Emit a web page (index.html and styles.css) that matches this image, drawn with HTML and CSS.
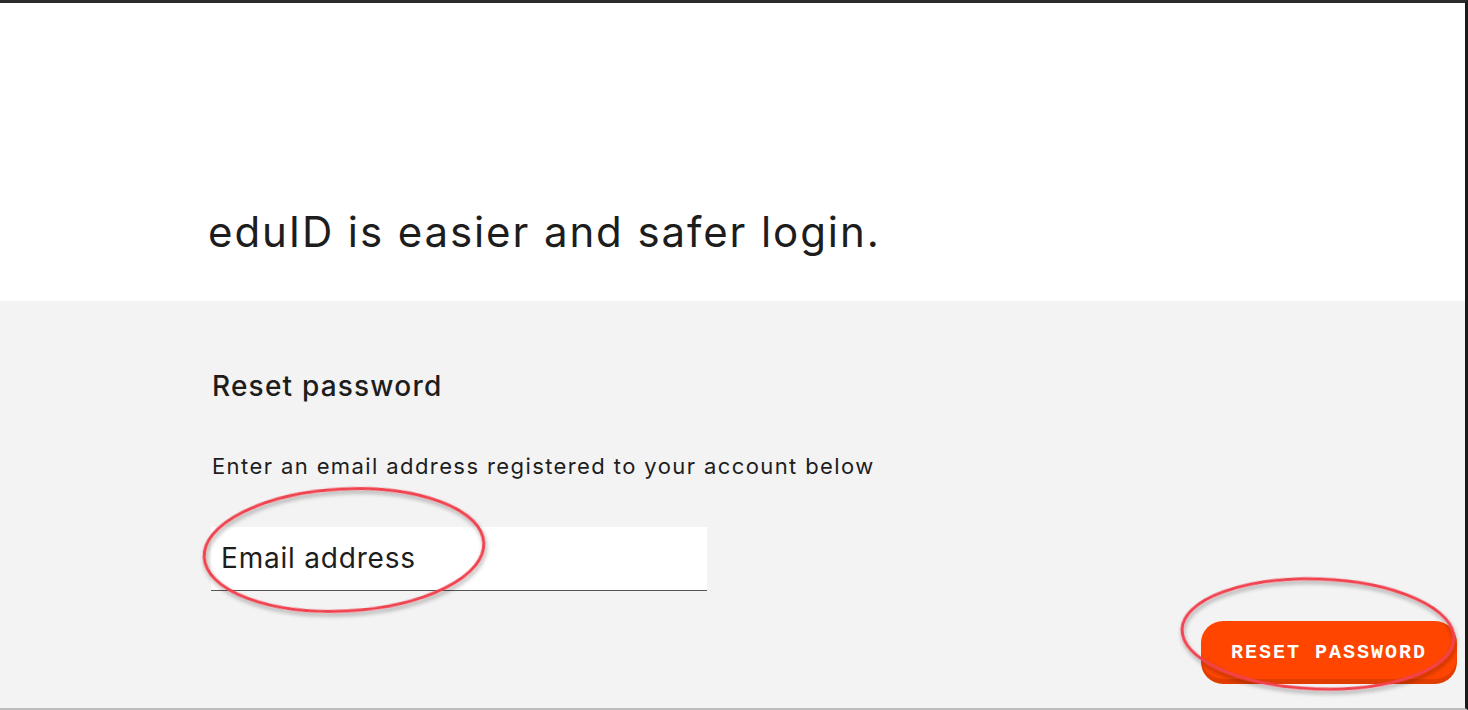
FILE: index.html
```html
<!DOCTYPE html>
<html lang="en">
<head>
    <meta charset="UTF-8">
    <meta name="viewport" content="width=device-width, initial-scale=1.0">
    <title>eduID - Reset password</title>
    <link rel="stylesheet" href="styles.css">
</head>
<body>
<div class="page">
    <header class="banner">
        <h1 class="banner-title">eduID is easier and safer login.</h1>
    </header>
    <main class="panel">
        <h2 class="panel-title">Reset password</h2>
        <p class="panel-text">Enter an email address registered to your account below</p>
        <form class="reset-form" onsubmit="return false;">
            <input class="email-input" type="email" placeholder="Email address">
            <div class="form-actions">
                <button class="btn-primary" type="submit">Reset password</button>
            </div>
        </form>
    </main>
    <!-- red annotation marks drawn over the screenshot -->
    <svg class="marks" width="1468" height="710" viewBox="0 0 1468 710">
        <defs>
            <filter id="markShadow" x="-20%" y="-20%" width="140%" height="140%">
                <feDropShadow dx="1" dy="3" stdDeviation="2" flood-color="#000" flood-opacity="0.35"/>
            </filter>
        </defs>
        <ellipse cx="344" cy="550" rx="140" ry="61" transform="rotate(-3 344 550)" class="mark"/>
        <ellipse cx="1318" cy="634" rx="136" ry="55" transform="rotate(2 1318 634)" class="mark"/>
    </svg>
</div>
</body>
</html>
```

FILE: styles.css
```css
body {
    margin: 0;
    font-family: 'Inter', 'Liberation Sans', sans-serif;
    color: #1d1d1d;
}
.page {
    position: relative;
    width: 1468px;
    height: 710px;
    box-sizing: border-box;
    border-top: 3px solid #2b2b2b;
    border-right: 3px solid #1a1a1a;
    border-bottom: 2px solid #bdbdbd;
    display: flex;
    flex-direction: column;
    overflow: hidden;
}
.banner {
    height: 298px;
    background: #fff;
    display: flex;
    align-items: flex-end;
    padding: 0 0 44px 208px;
    box-sizing: border-box;
}
.banner-title {
    margin: 0;
    font-size: 42px;
    font-weight: 400;
    line-height: 1.2;
    letter-spacing: 1.9px;
}
.panel {
    flex: 1;
    background: #f3f3f3;
    padding: 69px 8px 0 212px;
}
.panel-title {
    margin: 0;
    font-size: 28px;
    font-weight: 500;
    line-height: 1.2;
    letter-spacing: 1.2px;
}
.panel-text {
    margin: 49px 0 0;
    font-size: 22px;
    line-height: 1.2;
    letter-spacing: 1.4px;
}
.reset-form {
    margin-top: 48px;
}
.email-input {
    display: block;
    width: 496px;
    height: 64px;
    margin-left: -1px;
    box-sizing: border-box;
    border: 0;
    border-bottom: 1px solid #555;
    background: #fff;
    padding: 0 10px;
    font-family: inherit;
    font-size: 28px;
    letter-spacing: 0.8px;
    color: #1d1d1d;
}
.email-input::placeholder {
    color: #1d1d1d;
}
.form-actions {
    display: flex;
    justify-content: flex-end;
    margin-top: 30px;
}
.btn-primary {
    width: 256px;
    height: 58px;
    padding-top: 6px;
    border: 0;
    border-radius: 22px;
    background: #ff4500;
    box-shadow: 0 5px 0 #e03d00;
    color: #fff;
    font-family: 'Liberation Mono', monospace;
    font-weight: 700;
    font-size: 20px;
    letter-spacing: 2px;
    text-transform: uppercase;
    cursor: pointer;
}
.marks {
    position: absolute;
    left: 0;
    top: -3px;
    pointer-events: none;
}
.mark {
    fill: none;
    stroke: #f0424f;
    stroke-width: 3;
    filter: url(#markShadow);
}
```
